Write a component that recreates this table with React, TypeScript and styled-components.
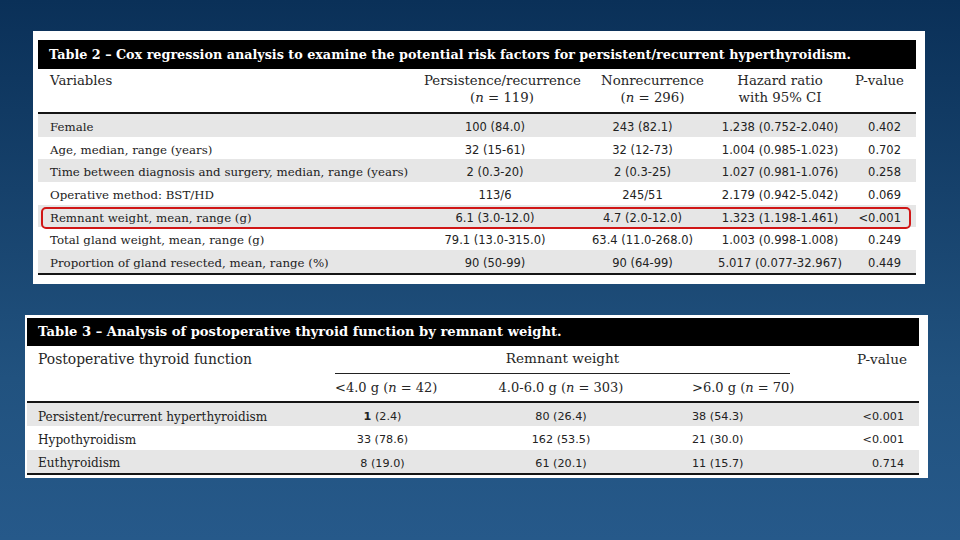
import styled, { createGlobalStyle } from "styled-components"

const GlobalStyle = createGlobalStyle`
  html, body {
    margin: 0;
    padding: 0;
  }
  body {
    width: 960px;
    height: 540px;
    overflow: hidden;
  }
`

const SERIF = `"DejaVu Serif", "Liberation Serif", serif`
const SANS = `"DejaVu Sans", "Liberation Sans", sans-serif`

const Page = styled.div`
  width: 960px;
  height: 540px;
  box-sizing: border-box;
  padding-top: 31px;
  display: flex;
  flex-direction: column;
  gap: 31px;
  background: linear-gradient(180deg, #0a3058 0%, #16416b 35%, #21527f 70%, #26598a 100%);
  color: #1d1d1d;
`

const Card = styled.div<{ $left: number; $width: number; $pad: string }>`
  margin-left: ${p => p.$left}px;
  width: ${p => p.$width}px;
  box-sizing: border-box;
  padding: ${p => p.$pad};
  background: #fff;
`

const TitleBar = styled.div<{ $h: number; $pl: number; $size: number }>`
  height: ${p => p.$h}px;
  display: flex;
  align-items: center;
  padding-left: ${p => p.$pl}px;
  background: #000;
  color: #fff;
  font-family: ${SERIF};
  font-weight: bold;
  font-size: ${p => p.$size}px;
  white-space: nowrap;
`

const Row = styled.div<{ $cols: string; $h?: number; $shade?: boolean; $mark?: boolean; $pt?: number }>`
  position: relative;
  box-sizing: border-box;
  display: grid;
  grid-template-columns: ${p => p.$cols};
  align-items: center;
  height: ${p => (p.$h ? `${p.$h}px` : "auto")};
  padding-top: ${p => p.$pt ?? 0}px;
  background: ${p => (p.$shade ? "#e6e6e6" : "transparent")};

  &::after {
    content: "";
    display: ${p => (p.$mark ? "block" : "none")};
    position: absolute;
    left: 3px;
    right: 5px;
    top: 2px;
    bottom: -2px;
    border: 2.5px solid #d01717;
    border-radius: 5px;
    pointer-events: none;
  }
`

const HeadRow = styled(Row)<{ $top?: boolean }>`
  align-items: ${p => (p.$top ? "start" : "center")};
  border-bottom: 2px solid #151515;
`

const Rule = styled.div`
  height: 2px;
  background: #151515;
`

const Head = styled.div<{
  $align?: string
  $pl?: number
  $pr?: number
  $pt?: number
  $line?: boolean
  $span?: string
  $size?: number
}>`
  grid-column: ${p => p.$span ?? "auto"};
  box-sizing: border-box;
  font-family: ${SERIF};
  font-size: ${p => p.$size ?? 13}px;
  line-height: 17px;
  text-align: ${p => p.$align ?? "center"};
  padding: ${p => p.$pt ?? 0}px ${p => p.$pr ?? 0}px 0 ${p => p.$pl ?? 0}px;
  white-space: nowrap;
  color: #262626;
  display: flex;
  flex-direction: column;
  border-bottom: ${p => (p.$line ? "1px solid #222" : "none")};
`

const Label = styled.div<{ $pl: number; $size: number }>`
  font-family: ${SERIF};
  font-size: ${p => p.$size}px;
  padding-left: ${p => p.$pl}px;
  white-space: nowrap;
  color: #222;
`

const Num = styled.div<{ $align?: string; $pl?: number; $pr?: number; $size: number }>`
  font-family: ${SANS};
  font-size: ${p => p.$size}px;
  text-align: ${p => p.$align ?? "center"};
  padding-left: ${p => p.$pl ?? 0}px;
  padding-right: ${p => p.$pr ?? 0}px;
  white-space: nowrap;
  color: #222;
`

const I = styled.i`
  font-family: ${SERIF};
`

const B = styled.b`
  font-weight: bold;
`

const T2_COLS = "382px 160px 125px 150px 1fr"
const T3_COLS = "308px 95px 262px 98px 1fr"

const table2 = [
  ["Female", "100 (84.0)", "243 (82.1)", "1.238 (0.752-2.040)", "0.402"],
  ["Age, median, range (years)", "32 (15-61)", "32 (12-73)", "1.004 (0.985-1.023)", "0.702"],
  ["Time between diagnosis and surgery, median, range (years)", "2 (0.3-20)", "2 (0.3-25)", "1.027 (0.981-1.076)", "0.258"],
  ["Operative method: BST/HD", "113/6", "245/51", "2.179 (0.942-5.042)", "0.069"],
  ["Remnant weight, mean, range (g)", "6.1 (3.0-12.0)", "4.7 (2.0-12.0)", "1.323 (1.198-1.461)", "<0.001"],
  ["Total gland weight, mean, range (g)", "79.1 (13.0-315.0)", "63.4 (11.0-268.0)", "1.003 (0.998-1.008)", "0.249"],
  ["Proportion of gland resected, mean, range (%)", "90 (50-99)", "90 (64-99)", "5.017 (0.077-32.967)", "0.449"],
]

const table3 = [
  ["Persistent/recurrent hyperthyroidism", "1", " (2.4)", "80 (26.4)", "38 (54.3)", "<0.001"],
  ["Hypothyroidism", "33", " (78.6)", "162 (53.5)", "21 (30.0)", "<0.001"],
  ["Euthyroidism", "8", " (19.0)", "61 (20.1)", "11 (15.7)", "0.714"],
]

function TableTwo() {
  return (
    <Card $left={33} $width={892} $pad="9px 9px 9px 5px">
      <TitleBar $h={29} $pl={11} $size={12.75}>
        Table 2 – Cox regression analysis to examine the potential risk factors for persistent/recurrent hyperthyroidism.
      </TitleBar>
      <HeadRow $cols={T2_COLS} $h={45} $top>
        <Head $align="left" $pl={12} $pt={3} $size={13.3}>Variables</Head>
        <Head $pl={4} $pt={3} $size={13.3}>
          <span>Persistence/recurrence</span>
          <span>(<I>n</I> = 119)</span>
        </Head>
        <Head $pl={20} $pt={3} $size={13.3}>
          <span>Nonrecurrence</span>
          <span>(<I>n</I> = 296)</span>
        </Head>
        <Head $pt={3} $size={13.3}>
          <span>Hazard ratio</span>
          <span>with 95% CI</span>
        </Head>
        <Head $align="right" $pr={13} $pt={3} $size={13.3}>P-value</Head>
      </HeadRow>
      {table2.map((r, i) => (
        <Row key={r[0]} $cols={T2_COLS} $h={22.7} $pt={3} $shade={i % 2 === 0} $mark={i === 4}>
          <Label $pl={12} $size={11.8}>{r[0]}</Label>
          <Num $size={11.5} $pr={10}>{r[1]}</Num>
          <Num $size={11.5}>{r[2]}</Num>
          <Num $size={11.6}>{r[3]}</Num>
          <Num $size={11.5} $align="right" $pr={15}>{r[4]}</Num>
        </Row>
      ))}
      <Rule />
    </Card>
  )
}

function TableThree() {
  return (
    <Card $left={25} $width={903} $pad="3px 9px 3px 2px">
      <TitleBar $h={28} $pl={11} $size={13.1}>
        Table 3 – Analysis of postoperative thyroid function by remnant weight.
      </TitleBar>
      <Row $cols={T3_COLS} $h={28}>
        <Head $align="left" $pl={11} $size={13.9}>Postoperative thyroid function</Head>
        <Head $span="2 / 5" $line $pt={4} $size={13.6} style={{ height: 28 }}>
          Remnant weight
        </Head>
        <Head $align="right" $pr={12} $size={13.6}>P-value</Head>
      </Row>
      <HeadRow $cols={T3_COLS} $h={29}>
        <div />
        <Head $align="left">
          <span>&lt;4.0 g (<I>n</I> = 42)</span>
        </Head>
        <Head>
          <span>4.0-6.0 g (<I>n</I> = 303)</span>
        </Head>
        <Head $align="left">
          <span>&gt;6.0 g (<I>n</I> = 70)</span>
        </Head>
        <div />
      </HeadRow>
      {table3.map((r, i) => (
        <Row key={r[0]} $cols={T3_COLS} $h={23.4} $pt={4} $shade={i % 2 === 0}>
          <Label $pl={11} $size={12.1}>{r[0]}</Label>
          <Num $size={11.2}>
            {i === 0 ? <B>{r[1]}</B> : r[1]}
            {r[2]}
          </Num>
          <Num $size={11.2}>{r[3]}</Num>
          <Num $size={11.2} $align="left">{r[4]}</Num>
          <Num $size={11.2} $align="right" $pr={15}>{r[5]}</Num>
        </Row>
      ))}
      <Rule />
    </Card>
  )
}

export default function App() {
  return (
    <>
      <GlobalStyle />
      <Page>
        <TableTwo />
        <TableThree />
      </Page>
    </>
  )
}
